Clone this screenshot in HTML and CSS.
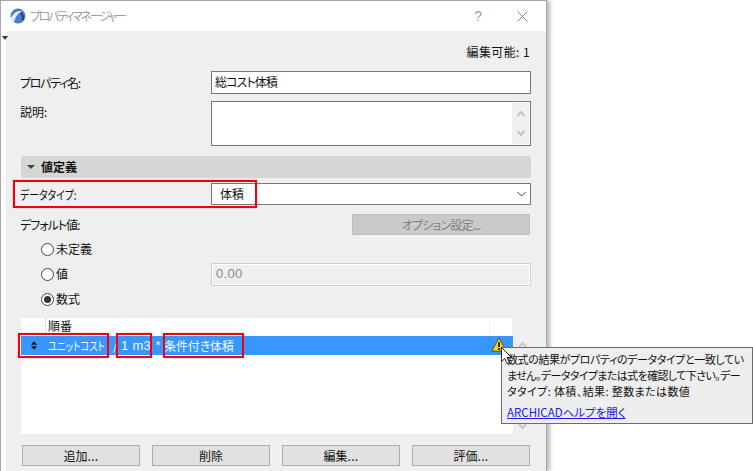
FILE: index.html
```html
<!DOCTYPE html>
<html lang="ja">
<head>
<meta charset="utf-8">
<title>プロパティマネージャー</title>
<link rel="stylesheet" href="styles.css">
</head>
<body>
<div class="dialog">
  <header class="titlebar">
    <svg class="logo" width="16" height="16" viewBox="0 0 16 16"><circle cx="8" cy="8" r="7.500" fill="#4a7ccf"/><path d="M.8 10.500C3 5 8 1.500 13 3.500C9 4 5.500 8 4 14.500C2.500 13.500 1.300 12 .8 10.500Z" fill="#e4ecf8"/><path d="M10.500 4.500Q13.500 7 13 12" stroke="#17336e" stroke-width="1.600" fill="none"/></svg>
    <span class="title">プロパティマネージャー</span>
    <span class="help">?</span>
    <svg class="close" width="11" height="11" viewBox="0 0 11 11"><path d="M.5.5l10 10M10.5.5l-10 10" stroke="#8a8a8a" fill="none"/></svg>
  </header>
  <div class="shell">
    <div class="rail"><span class="rail-arrow"></span></div>
    <main class="content">
      <div class="editable">編集可能: 1</div>
      <div class="row name-row">
        <label class="label"><span class="tight-name">プロパティ名:</span></label>
        <div class="field field-text">総コスト体積</div>
      </div>
      <div class="row desc-row">
        <label class="label">説明:</label>
        <div class="field field-area">
          <div class="area-scroll">
            <svg width="8" height="6" viewBox="0 0 8 6"><path d="M.5 5L4 1l3.500 4" stroke="#c4c4c4" stroke-width="2" fill="none"/></svg>
            <svg width="8" height="6" viewBox="0 0 8 6"><path d="M.5 1L4 5l3.500-4" stroke="#c4c4c4" stroke-width="2" fill="none"/></svg>
          </div>
        </div>
      </div>
      <div class="section"><span class="section-arrow"></span>値定義</div>
      <div class="row type-row">
        <label class="label"><span class="tight-type">データタイプ:</span></label>
        <div class="field field-select">
          <span>体積</span>
          <svg width="9" height="6" viewBox="0 0 9 6"><path d="M.5 1l4 4 4-4" stroke="#444" fill="none"/></svg>
        </div>
      </div>
      <div class="row default-row">
        <label class="label"><span class="tight-default">デフォルト値:</span></label>
        <div class="option-button">オプション設定...</div>
      </div>
      <div class="radios">
        <div class="radio-row"><span class="radio"></span>未定義</div>
        <div class="radio-row value-row"><span class="radio"></span><span class="radio-text">値</span><div class="value-input">0.00</div></div>
        <div class="radio-row"><span class="radio radio-on"></span>数式</div>
      </div>
      <div class="list-wrap">
        <div class="list">
          <div class="list-head"><span class="head-name">順番</span><span class="head-end"></span></div>
          <div class="list-row">
            <svg class="grip" width="6" height="9" viewBox="0 0 7 10"><path d="M3.500 0L7 4H0ZM0 6h7L3.500 10Z" fill="#111"/></svg>
            <span class="f-unit">ユニットコスト</span><span class="f-op">/</span><span class="f-qty">1 m3</span><span class="f-op">*</span><span class="f-cond">条件付き体積</span>
            <svg class="warn" width="16" height="15" viewBox="0 0 16 15"><path d="M8 .8L15.400 14.200H.6Z" fill="#f4d21f" stroke="#5b5215"/><path d="M8 5v5M8 11v2" stroke="#222" stroke-width="1.800"/></svg>
          </div>
        </div>
        <div class="list-scroll">
          <svg width="9" height="7" viewBox="0 0 9 7"><path d="M1 6l3.500-4L8 6" stroke="#c8c8c8" stroke-width="2" fill="none"/></svg>
          <svg width="9" height="7" viewBox="0 0 9 7"><path d="M1 1l3.500 4L8 1" stroke="#c8c8c8" stroke-width="2" fill="none"/></svg>
        </div>
      </div>
      <div class="buttons">
        <div class="button">追加<span class="dots">...</span></div>
        <div class="button">削除</div>
        <div class="button">編集<span class="dots">...</span></div>
        <div class="button">評価<span class="dots">...</span></div>
      </div>
    </main>
  </div>
</div>
<div class="mark mark-type"></div>
<div class="mark mark-a"></div>
<div class="mark mark-b"></div>
<div class="mark mark-c"></div>
<aside class="tooltip">
  <p><span class="tip-1">数式の結果がプロパティのデータタイプと一致してい</span><br><span class="tip-2">ません。データタイプまたは式を確認して下さい。デー</span><br><span class="tip-3">タタイプ: 体積、結果: 整数または数値</span></p>
  <a class="help-link" href="#">ARCHICADヘルプを開く</a>
</aside>
<svg class="cursor" width="11" height="18" viewBox="0 0 11 18"><path d="M.5.500V14.500L3.800 11.500L6 16.500L8.300 15.500L6 10.500H10.500Z" fill="#fff" stroke="#222"/></svg>
</body>
</html>
```
FILE: styles.css
```css
* { box-sizing: border-box; }
html, body { margin: 0; padding: 0; }
body {
  width: 753px;
  height: 471px;
  overflow: hidden;
  position: relative;
  background: #fff;
  color: #111;
  font: 12px/16px "Noto Sans CJK JP", "Liberation Sans", sans-serif;
  font-feature-settings: "palt";
}
.dialog {
  width: 547px;
  height: 471px;
  border: 1px solid #a8a8a8;
  border-bottom: 0;
  background: #fff;
  box-shadow: 3px 0 4px rgba(0,0,0,.28);
  display: flex;
  flex-direction: column;
}
.titlebar {
  height: 30px;
  flex: none;
  display: flex;
  align-items: center;
  padding: 0 18px 0 9px;
}
.logo { margin-right: 4px; }
.title { color: #a0a0a0; font-size: 12px; flex: 1; letter-spacing: -2.300px; }
.help { color: #a0a0a0; font: 14px "Liberation Sans", sans-serif; margin-right: 35px; }
.shell { flex: 1; display: flex; min-height: 0; }
.rail { width: 5px; flex: none; position: relative; }
.rail-arrow {
  position: absolute; left: 1px; top: 5px;
  border: 3px solid transparent; border-top: 4px solid #333; border-bottom: 0;
}
.content {
  flex: 1;
  background: #efefef;
  padding: 13px 15px 0 15px;
  display: flex;
  flex-direction: column;
}
.editable { text-align: right; height: 16px; margin-bottom: 11px; padding-right: 1px; letter-spacing: .4px; }
.row { display: flex; align-items: flex-start; }
.label { width: 190px; flex: none; margin-left: -1px; }
.tight-name { letter-spacing: -1.300px; }
.tight-default { letter-spacing: -1px; }
.tight-type { display: inline-block; transform: scaleX(.82); transform-origin: left center; margin-top: 1px; }
.field { flex: 1; background: #fff; border: 1px solid #777; margin-left: 1px; }
.name-row { height: 23px; align-items: center; }
.field-text { height: 23px; padding: 2px 3px; letter-spacing: -.9px; }
.desc-row { margin-top: 7px; height: 45px; }
.desc-row .label { padding-top: 3px; }
.field-area { height: 45px; display: flex; justify-content: flex-end; padding: 1px; }
.area-scroll {
  width: 17px; background: #f0f0f0; display: flex; flex-direction: column;
  align-items: center; justify-content: space-between; padding: 8px 0;
}
.section {
  margin-top: 10px; height: 22px; background: #d6d6d6; border-radius: 3px;
  display: flex; align-items: center; padding-left: 6px; font-weight: 700; font-size: 12px;
}
.section-arrow {
  width: 0; height: 0; margin-right: 6px;
  border: 4px solid transparent; border-top: 4px solid #444; border-bottom: 0;
}
.type-row { margin-top: 5px; height: 22px; align-items: center; }
.field-select {
  height: 22px; display: flex; align-items: center; justify-content: space-between;
  padding: 0 4px 0 8px;
}
.default-row { margin-top: 9px; height: 21px; justify-content: space-between; align-items: center; }
.option-button {
  width: 178px; height: 21px; background: #cacaca; border: 1px solid #bdbdbd;
  color: #7f7f7f; text-align: center; line-height: 19px; margin-right: 1px; letter-spacing: -.8px;
}
.radios { padding-left: 20px; margin-top: 2px; display: flex; flex-direction: column; }
.radio-row { height: 25px; display: flex; align-items: center; padding-bottom: 1px; }
.radio {
  width: 13px; height: 13px; border: 1px solid #444; border-radius: 50%; background: #fff;
  margin-right: 2px; flex: none; display: flex; align-items: center; justify-content: center;
}
.radio-on::after { content: ""; width: 7px; height: 7px; border-radius: 50%; background: #333; }
.radio-text { width: 155px; flex: none; }
.value-input {
  flex: 1; height: 23px; background: #efefef; border: 1px solid #cfcfcf;
  box-shadow: inset 0 0 0 1px #fff; color: #8a8a8a; padding: 2px 4px;
  font-family: "Liberation Sans", sans-serif; font-size: 13px; letter-spacing: .3px;
}
.list-wrap { margin-top: 6px; height: 116px; display: flex; flex: none; }
.list { width: 492px; background: #fff; position: relative; }
.list-head { height: 18px; display: flex; position: relative; padding-left: 27px; }
.list-head::before {
  content: ""; position: absolute; left: 24px; top: 0; height: 18px; border-left: 1px solid #ddd;
}
.head-name { flex: 1; }
.head-end { width: 24px; border-left: 1px solid #eee; border-right: 1px solid #eee; height: 18px; }
.list-row {
  height: 19px; background: #3797fd; color: #f2f7ff; display: flex; align-items: center;
  padding-left: 10px; position: relative; white-space: pre;
}
.grip { margin-right: 11px; flex: none; }
.f-unit { width: 62px; flex: none; transform: scaleX(.78); transform-origin: left center; }
.f-op { flex: none; width: 10px; text-align: center; }
.f-qty { flex: none; width: 33px; letter-spacing: .3px; padding-left: 1px; font-family: "Liberation Sans", sans-serif; font-size: 13px; }
.f-cond { letter-spacing: -.1px; margin-left: 1px; }
.warn { position: absolute; right: 6px; top: 1px; }
.list-scroll {
  flex: 1; display: flex; flex-direction: column; align-items: center; justify-content: space-between;
  padding: 23px 0 4px;
}
.buttons { margin-top: 11px; display: flex; gap: 12px; padding-left: 1px; }
.button {
  width: 118px; height: 21px; background: #e1e1e1; border: 1px solid #adadad;
  text-align: center; line-height: 19px;
}
.dots { letter-spacing: .4px; }
.mark { position: absolute; border: 2px solid #f2000e; box-shadow: 0 0 1px #ff7080; }
.mark-type { left: 13px; top: 180px; width: 244px; height: 28px; }
.mark-a { left: 18px; top: 333px; width: 91px; height: 25px; }
.mark-b { left: 116px; top: 333px; width: 36px; height: 25px; }
.mark-c { left: 163px; top: 333px; width: 81px; height: 25px; }
.tooltip {
  position: absolute; left: 501px; top: 347px; width: 252px; height: 77px;
  background: #eeeeee; border: 1px solid #6b6b6b; padding: 3px 0 0 5px;
  font-size: 11px; line-height: 16px; white-space: nowrap;
}
.tooltip p { margin: 0 0 5px; }
.tip-1 { letter-spacing: -.4px; }
.tip-2 { letter-spacing: -.6px; }
.tip-3 { letter-spacing: .4px; }
.help-link { color: #1a1aee; text-decoration: underline; font-size: 11.500px; }
.cursor { position: absolute; left: 501px; top: 347px; }
```
